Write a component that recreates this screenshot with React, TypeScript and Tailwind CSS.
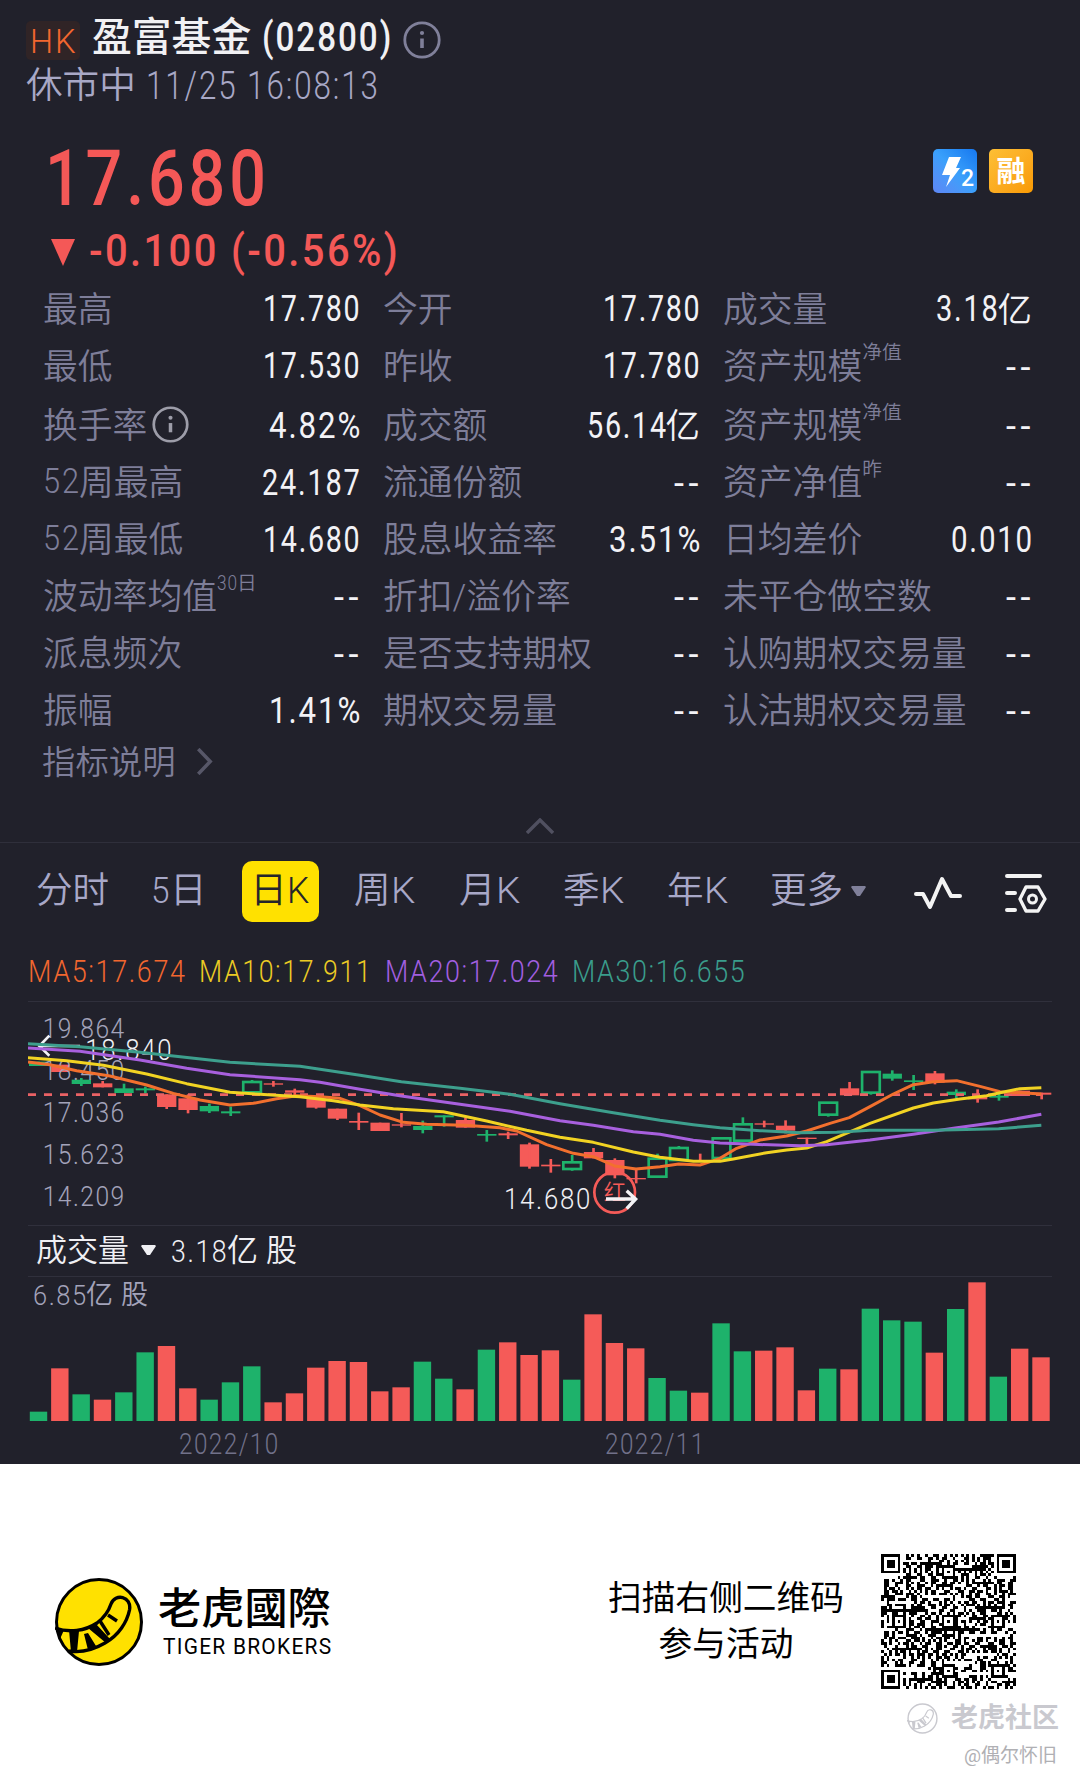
import React, { useLayoutEffect, useRef, useState } from 'react';

/* Squeezes a run of text horizontally so that it fills the given width. */
function Fit({ w, className = '', children }: { w: number; className?: string; children: React.ReactNode }) {
  const ref = useRef<HTMLSpanElement>(null);
  const [s, setS] = useState(1);
  useLayoutEffect(() => {
    if (ref.current) {
      const gap = parseFloat(getComputedStyle(ref.current).letterSpacing) || 0;
      setS(w / (ref.current.offsetWidth - gap));
    }
  }, [w]);
  return (
    <span className={'inline-block shrink-0 whitespace-nowrap ' + className} style={{ width: w }}>
      <span ref={ref} className="inline-block origin-left tracking-[0.06em]" style={{ transform: `scaleX(${s})` }}>
        {children}
      </span>
    </span>
  );
}

function Info({ className }: { className: string }) {
  return (
    <svg viewBox="0 0 38 38" className={className} fill="none" stroke="currentColor">
      <circle cx="19" cy="19" r="17.2" strokeWidth="2.8" />
      <path d="M19 17.5v9.5" strokeWidth="3.6" />
      <circle cx="19" cy="12" r="2.1" fill="currentColor" stroke="none" />
    </svg>
  );
}

type Cell = { l: string; sup?: string; info?: boolean; v: string; w?: number; u?: string };
const rows: Cell[][] = [
  [{ l: '最高', v: '17.780', w: 97 }, { l: '今开', v: '17.780', w: 97 }, { l: '成交量', v: '3.18', w: 62, u: '亿' }],
  [{ l: '最低', v: '17.530', w: 97 }, { l: '昨收', v: '17.780', w: 97 }, { l: '资产规模', sup: '净值', v: '--' }],
  [{ l: '换手率', info: true, v: '4.82%', w: 91 }, { l: '成交额', v: '56.14', w: 79, u: '亿' }, { l: '资产规模', sup: '净值', v: '--' }],
  [{ l: '52周最高', v: '24.187', w: 98 }, { l: '流通份额', v: '--' }, { l: '资产净值', sup: '昨', v: '--' }],
  [{ l: '52周最低', v: '14.680', w: 97 }, { l: '股息收益率', v: '3.51%', w: 91 }, { l: '日均差价', v: '0.010', w: 81 }],
  [{ l: '波动率均值', sup: '30日', v: '--' }, { l: '折扣/溢价率', v: '--' }, { l: '未平仓做空数', v: '--' }],
  [{ l: '派息频次', v: '--' }, { l: '是否支持期权', v: '--' }, { l: '认购期权交易量', v: '--' }],
  [{ l: '振幅', v: '1.41%', w: 91 }, { l: '期权交易量', v: '--' }, { l: '认沽期权交易量', v: '--' }],
];

function Label({ c }: { c: Cell }) {
  const num = c.l.startsWith('52');
  return (
    <span className="flex items-center text-[34.8px] font-[350] text-[#7e7e99]">
      {num && <Fit w={36} className="text-[35px] font-light">52</Fit>}
      <span className="mt-[3px]">{num ? c.l.slice(2) : c.l}</span>
      {c.sup && <span className="mb-[25px] text-[19.7px]">{c.sup === '30日' ? <><Fit w={20}>30</Fit>日</> : c.sup}</span>}
      {c.info && <Info className="ml-[5px] size-[37px] text-[#9d9da9]" />}
    </span>
  );
}

const G = '#1eb26b';
const R = '#f55b58';

/* Each candle: body top, body bottom, wick top, wick bottom, kind (g green, r red, h hollow green). */
const candles: [number, number, number, number, string][] = [
  [365, 378, 365, 378, 'g'], [374, 396, 374, 396, 'r'], [419, 432, 414, 438, 'g'], [430, 442, 423, 442, 'r'],
  [445, 459, 431, 459, 'g'], [445, 451, 440, 460, 'g'], [463, 501, 463, 507, 'r'], [475, 510, 463, 520, 'r'],
  [498, 514, 491, 519, 'g'], [514, 520, 500, 528, 'g'], [426, 457, 420, 457, 'h'], [430, 434, 423, 440, 'r'],
  [451, 458, 446, 465, 'r'], [475, 503, 475, 506, 'r'], [506, 536, 506, 540, 'r'], [543, 548, 518, 570, 'r'],
  [548, 573, 548, 573, 'r'], [553, 557, 519, 562, 'r'], [558, 570, 542, 580, 'g'], [526, 532, 526, 560, 'g'],
  [540, 563, 533, 563, 'r'], [582, 587, 570, 605, 'g'], [580, 586, 575, 597, 'r'], [613, 680, 608, 686, 'r'],
  [674, 679, 657, 698, 'r'], [667, 687, 645, 692, 'h'], [636, 655, 624, 655, 'r'], [660, 706, 655, 715, 'r'],
  [714, 718, 690, 730, 'r'], [656, 710, 641, 710, 'h'], [624, 660, 618, 660, 'h'], [660, 664, 641, 665, 'r'],
  [595, 654, 592, 654, 'h'], [553, 602, 532, 602, 'h'], [550, 554, 542, 562, 'r'], [557, 572, 541, 580, 'r'],
  [593, 597, 593, 620, 'r'], [488, 524, 488, 530, 'h'], [445, 466, 426, 466, 'r'], [396, 458, 396, 464, 'h'],
  [401, 416, 391, 422, 'g'], [421, 426, 405, 450, 'g'], [400, 428, 393, 433, 'r'], [455, 465, 448, 475, 'g'],
  [470, 478, 448, 488, 'r'], [467, 473, 455, 482, 'g'], [452, 468, 452, 468, 'r'], [458, 464, 458, 478, 'r'],
];

const MA30 = '84,311 240,320 420,337 500,346 690,367 900,379 1080,406 1204,425 1380,445 1530,463 1680,491 1840,518 1980,541 2080,554 2160,563 2280,572 2400,578 2510,577 2610,571 2800,571 2996,566 3124,556';
const MA20 = '84,324 240,334 420,360 560,385 690,404 900,419 960,427 1080,448 1204,468 1380,493 1530,514 1680,542 1780,556 1900,575 1980,583 2080,601 2160,609 2260,613 2400,617 2480,614 2610,600 2740,583 2860,565 2996,546 3124,523';
const MA10 = '84,353 200,362 310,376 440,402 560,431 690,457 780,463 900,470 1000,482 1080,495 1180,506 1330,515 1460,543 1580,571 1680,592 1780,607 1900,636 1980,652 2080,664 2160,664 2200,657 2300,638 2360,630 2420,624 2480,605 2610,550 2740,504 2800,489 2880,477 2960,467 3000,458 3060,446 3124,443';
const MA5 = '84,366 150,374 230,392 330,408 440,435 520,460 600,480 690,495 760,490 830,476 890,467 960,470 1020,475 1080,497 1140,525 1210,547 1280,553 1396,556 1500,563 1550,573 1640,614 1720,640 1780,650 1844,678 1908,687 1980,680 2036,672 2100,675 2140,662 2160,655 2210,625 2280,600 2360,588 2420,573 2490,550 2548,533 2610,500 2680,462 2740,434 2800,425 2870,422 2940,439 3000,455 3124,462';

const axis = [['19.864', 295], ['18.450', 421], ['17.036', 546], ['15.623', 672], ['14.209', 798]] as const;

function PriceChart() {
  return (
    <svg viewBox="84 186 3072 669" className="block h-[223px] w-[1024px] font-['Roboto',sans-serif]">
      <g fill="#efeff4" fontSize="90" letterSpacing="6">
        <text x="256" y="359" textLength="264" lengthAdjust="spacingAndGlyphs" fontWeight="300">18.840</text>
        <text x="1512" y="806" textLength="264" lengthAdjust="spacingAndGlyphs" fontWeight="350">14.680</text>
      </g>
      {candles.map(([t, b, hi, lo, k], i) => {
        const x = 116 + 64.02 * i;
        const c = k === 'r' ? R : G;
        return (
          <g key={i}>
            {k === 'h' ? (
              <>
                <rect x={x - 26.5} y={t} width="53" height={b - t} fill="none" stroke={c} strokeWidth="8" />
                <path d={`M${x} ${hi}V${t}M${x} ${b}V${lo}`} stroke={c} strokeWidth="8" />
              </>
            ) : (
              <>
                <rect x={x - 29} y={t} width="58" height={b - t} fill={c} />
                <path d={`M${x} ${hi}V${lo}`} stroke={c} strokeWidth="8" />
              </>
            )}
          </g>
        );
      })}
      <path d="M84 464H3124" stroke="#ea6265" strokeWidth="8" strokeDasharray="24 24" />
      <g fontWeight="300" fill="#a3a3ba" fontSize="84" letterSpacing="5">
        {axis.map(([s, y]) => (
          <text key={s} x="128" y={y} textLength="249" lengthAdjust="spacingAndGlyphs">{s}</text>
        ))}
      </g>
      <path d="M148 287L118 318L148 347M118 318H240" fill="none" stroke="#f3f3f6" strokeWidth="8" />
      <g fill="none" strokeWidth="9" strokeLinejoin="round">
        <polyline points={MA5} stroke="#f2702e" />
        <polyline points={MA10} stroke="#f2d323" />
        <polyline points={MA20} stroke="#a860de" />
        <polyline points={MA30} stroke="#3d9f8d" />
      </g>
      <circle cx="1844" cy="757" r="61" fill="none" stroke={R} strokeWidth="8" />
      <text x="1844" y="779" textAnchor="middle" fontSize="66" fontWeight="350" fill={R} className="font-['Noto_Sans_CJK_SC',sans-serif]">红</text>
      <path d="M1818 777H1906M1880 752L1907 777L1880 806" fill="none" stroke="#f3f3f6" strokeWidth="10" />
    </svg>
  );
}

const bars =
  '574g 444r 522g 538r 516g 396g 377r 504r 538g 486g 438g 546r 519r 442r 422r 425r 513r 501r 424g 475g 507r 388g 366r 404r 390r 478g 282r 368r 384r 473g 511g 517r 309g 393g 391r 381r 510r 445g 447r 265g 300g 304g 397r 266g 186r 469g 385r 411r'.split(' ');

function VolumeBars() {
  return (
    <svg viewBox="28 0 1024 144" className="block h-[144px] w-[1024px]">
      {bars.map((b, i) => {
        const h = (602 - parseInt(b)) / 3;
        return <rect key={i} x={29.8 + 21.33 * i} y={144 - h} width="17.4" height={h} fill={b.endsWith('g') ? G : R} />;
      })}
    </svg>
  );
}

const QN = 49;
function qrPath() {
  let seed = 20221125;
  const rnd = () => {
    seed = (seed * 1103515245 + 12345) & 0x7fffffff;
    return (seed >> 12) & 1;
  };
  const ring = (dx: number, dy: number, r: number) => Math.max(Math.abs(dx), Math.abs(dy)) === r;
  let d = '';
  for (let y = 0; y < QN; y++) {
    for (let x = 0; x < QN; x++) {
      let on = rnd() === 1;
      if (y === 6 || x === 6) on = (x + y) % 2 === 0;
      for (const [ax, ay] of [[24, 6], [6, 24], [24, 24], [42, 24], [24, 42], [42, 42]]) {
        const dx = x - ax, dy = y - ay;
        if (Math.abs(dx) < 3 && Math.abs(dy) < 3) on = !ring(dx, dy, 1);
      }
      for (const [fx, fy] of [[3, 3], [45, 3], [3, 45]]) {
        const dx = x - fx, dy = y - fy;
        if (Math.abs(dx) < 5 && Math.abs(dy) < 5) on = !ring(dx, dy, 2) && !ring(dx, dy, 4);
      }
      if (on) d += `M${x} ${y}h1v1h-1z`;
    }
  }
  return d;
}

function Tail() {
  return (
    <>
      <path d="M0 50C14 55 30 53 42 45C50 39 54 32 56 26C60 15 77 18 74.500 32C72 44 64 57 50 65C38 72 26 75 14 73" fill="none" stroke="currentColor" strokeWidth="3.4" />
      <path d="M1 49L9 52L5 61ZM14 52L24 53L22 74L16 74ZM33 50L41 46L55 61L51 65ZM29 56L33 55L41 68L33 72Z" fill="currentColor" />
      <path d="M45 43L54 57M53 37L62 43" stroke="currentColor" strokeWidth="3.4" fill="none" />
    </>
  );
}

export default function App() {
  return (
    <div className="flex h-[1780px] w-[1080px] flex-col overflow-hidden bg-white font-['Roboto','Noto_Sans_CJK_SC',sans-serif] leading-none">
      <main className="h-[1464px] shrink-0 bg-[#21212b]">
        <header className="h-[112px] pl-[26px]">
          <div className="flex h-[62px] pt-[16px]">
            <span className="mt-[5px] flex h-[39px] w-[54px] items-center justify-center rounded-[5px] bg-[#302426] text-[34px] font-light text-[#f2672f]"><Fit w={46}>HK</Fit></span>
            <span className="mt-[1.5px] ml-[12px] text-[39.800px] font-medium text-[#f1f1f4]">盈富基金</span>
            <Fit w={129} className="mt-[1.5px] ml-[11px] text-[40px] font-medium text-[#f1f1f4]">(02800)</Fit>
            <Info className="mt-[5px] ml-[12px] size-[38px] text-[#80809a]" />
          </div>
          <div className="flex h-[44px] items-center text-[36.6px] font-[350] text-[#a8a8c6]">
            <span className="mt-[5px]">休市中</span>
            <Fit w={232} className="mt-[3px] ml-[10px] text-[38px] font-light">11/25 16:08:13</Fit>
          </div>
        </header>

        <section className="flex h-[168px] justify-between pr-[47px] pl-[47px]">
          <div className="text-[#f45857]">
            <Fit w={221} className="mt-[29px] -ml-[2px] block text-[77px] font-medium">17.680</Fit>
            <div className="mt-[10px] flex h-[44px] items-center">
              <svg viewBox="0 0 24 27" className="mt-[4px] ml-[4px] h-[27px] w-[24px]"><path d="M0 0H24L12 27Z" fill="currentColor" /></svg>
              <Fit w={309} className="mt-[1px] ml-[14px] text-[45px] font-medium">-0.100 (-0.56%)</Fit>
            </div>
          </div>
          <div className="flex gap-[12px] pt-[37px]">
            <div className="relative size-[44px] rounded-[5px] bg-linear-to-tr from-[#5d86f5] via-[#3aa0fb] to-[#1677ef]">
              <svg viewBox="0 0 44 44" className="absolute inset-0 size-[44px]"><path d="M16 8H28L23 19H27L13 38L17 26H9Z" fill="#fff" /></svg>
              <span className="absolute right-[3px] bottom-[3px] text-[23px] font-medium text-white">2</span>
            </div>
            <div className="flex size-[44px] items-center justify-center rounded-[5px] bg-linear-to-br from-[#fdbf35] to-[#f99a00] pt-[2px] text-[29px] font-bold text-white">融</div>
          </div>
        </section>

        <section className="pr-[47px] pl-[43px]">
          {rows.map((r, i) => (
            <div key={i} className={'grid h-[57px] grid-cols-[317px_317px_309px] gap-x-[23px] ' + (i === 2 ? 'mt-[2.5px]' : '')}>
              {r.map((c, j) => (
                <div key={j} className="flex items-center justify-between">
                  <Label c={c} />
                  <span className="flex items-center pt-[1px] text-[36px] font-normal text-[#f2f2f6]">
                    {c.w ? <Fit w={c.w}>{c.v}</Fit> : <span className="-mr-[3px] pt-[3px] tracking-[4.5px]">{c.v}</span>}
                    {c.u && <span className="pt-[2px] text-[34.5px] font-[350]">{c.u}</span>}
                  </span>
                </div>
              ))}
            </div>
          ))}
          <div className="-ml-[1px] flex h-[45px] items-center text-[33.4px] font-[350] text-[#7e7e99]">
            <span className="mt-[3px]">指标说明</span>
            <svg viewBox="0 0 16 26" className="ml-[20px] h-[27px] w-[17px]" fill="none" stroke="#575768" strokeWidth="3.4"><path d="M2 1L13.5 13L2 25" /></svg>
          </div>
        </section>

        <div className="flex h-[59px] justify-center border-b border-[#2f2f3b] pt-[34px]">
          <svg viewBox="0 0 28 16" className="h-[16px] w-[28px]" fill="none" stroke="#505060" strokeWidth="3.4"><path d="M1 15L14 2L27 15" /></svg>
        </div>

        <nav className="flex h-[97px] pt-[18px] text-[36.6px] font-[350] text-[#a8a8c8]">
          <span className="flex h-[61px] w-[115px] items-center pl-[36px]">分时</span>
          <span className="flex h-[61px] w-[127px] items-center pl-[36px]"><Fit w={19} className="font-light">5</Fit>日</span>
          <span className="flex h-[61px] w-[77px] items-center justify-center rounded-[10px] bg-[#ffe100] pr-[2px] text-[#25252b]">日<Fit w={22} className="font-light">K</Fit></span>
          <span className="flex h-[61px] w-[105px] items-center pl-[35px]">周<Fit w={24} className="font-light">K</Fit></span>
          <span className="flex h-[61px] w-[105px] items-center pl-[35px]">月<Fit w={24} className="font-light">K</Fit></span>
          <span className="flex h-[61px] w-[104px] items-center pl-[34px]">季<Fit w={24} className="font-light">K</Fit></span>
          <span className="flex h-[61px] w-[104px] items-center pl-[34px]">年<Fit w={24} className="font-light">K</Fit></span>
          <span className="flex h-[61px] w-[177px] items-center pl-[33px]">
            更多
            <svg viewBox="0 0 15 11" className="ml-[8px] h-[11px] w-[15px]"><path d="M1 0H14L15 1L9 10H6L0 1Z" fill="#80809a" /></svg>
          </span>
          <svg viewBox="0 0 48 34" className="mt-[15px] h-[34px] w-[48px]" fill="none" stroke="#f3f3f3" strokeWidth="4" strokeLinecap="round" strokeLinejoin="round"><path d="M2 18H9L16 31L28 3L37 20H46" /></svg>
          <svg viewBox="0 0 44 40" className="mt-[12px] ml-[42px] h-[40px] w-[44px]" fill="none" stroke="#f3f3f3" strokeWidth="4" strokeLinecap="round" strokeLinejoin="round">
            <path d="M3 3H36M3 20H11M3 37H11" />
            <path d="M22 14H34L41 26L34 38H22L16 26Z" strokeWidth="3.4" />
            <circle cx="28.500" cy="26" r="4" strokeWidth="3" />
          </svg>
        </nav>

        <div className="mx-[28px]">
          <div className="flex h-[62px] items-center border-b border-[#30303c] text-[32px] font-light">
            <Fit w={157} className="mt-[1px] text-[#f2672f]">MA5:17.674</Fit>
            <Fit w={172} className="mt-[1px] ml-[14px] text-[#eccb24]">MA10:17.911</Fit>
            <Fit w={173} className="mt-[1px] ml-[14px] text-[#a25fe0]">MA20:17.024</Fit>
            <Fit w={173} className="mt-[1px] ml-[14px] text-[#3a9d8c]">MA30:16.655</Fit>
          </div>
          <PriceChart />
          <div className="flex h-[52px] items-center border-y border-[#30303c] pl-[8px] text-[31px] font-[350] text-[#f0f0f4]">
            成交量
            <svg viewBox="0 0 15 11" className="ml-[12px] h-[11px] w-[15px]"><path d="M1 0H14L15 1L9 10H6L0 1Z" fill="currentColor" /></svg>
            <Fit w={56} className="ml-[15px] text-[32px] font-light">3.18</Fit>亿<span className="ml-[8px]">股</span>
          </div>
          <div className="relative h-[144px]">
            <div className="absolute top-[5px] left-[5px] flex items-center text-[27px] font-[350] text-[#a3a3ba]">
              <Fit w={53} className="text-[28px] font-light">6.85</Fit>亿<span className="ml-[8px]">股</span>
            </div>
            <VolumeBars />
          </div>
          <div className="flex h-[43px] pt-[9px] text-[29px] font-light text-[#71718a]">
            <Fit w={99} className="ml-[151px]">2022/10</Fit>
            <Fit w={99} className="ml-[327px]">2022/11</Fit>
          </div>
        </div>
      </main>

      <footer className="flex h-[316px] pl-[55px] text-black">
        <svg viewBox="0 0 88 88" className="mt-[114px] size-[88px] shrink-0 text-black">
          <circle cx="44" cy="44" r="42.500" fill="#ffe100" stroke="currentColor" strokeWidth="3" />
          <Tail />
        </svg>
        <div className="mt-[124px] ml-[15px] w-[190px]">
          <div className="text-[43.200px] font-medium">老虎國際</div>
          <Fit w={168} className="mt-[5px] ml-[5px] block text-[22px] font-normal">TIGER BROKERS</Fit>
        </div>
        <div className="mt-[112px] ml-[258px] w-[240px] text-center text-[33.700px] leading-[46px] font-normal">
          扫描右侧二维码<br />参与活动
        </div>
        <div className="ml-[35px] w-[180px]">
          <svg viewBox="0 0 49 49" className="mt-[90px] size-[135px]" shapeRendering="crispEdges"><path d={qrPath()} /></svg>
          <div className="mt-[12px] ml-[26px] flex h-[34px] items-center text-[27px] font-bold text-[#c9c9cf]">
            <svg viewBox="0 0 88 88" className="mr-[13px] size-[31px]">
              <circle cx="44" cy="44" r="41" fill="none" stroke="currentColor" strokeWidth="4" />
              <Tail />
            </svg>
            老虎社区
          </div>
          <div className="mt-[11px] ml-[83px] text-[19px] font-normal whitespace-nowrap text-[#b0b0b4]">@偶尔怀旧</div>
        </div>
      </footer>
    </div>
  );
}
